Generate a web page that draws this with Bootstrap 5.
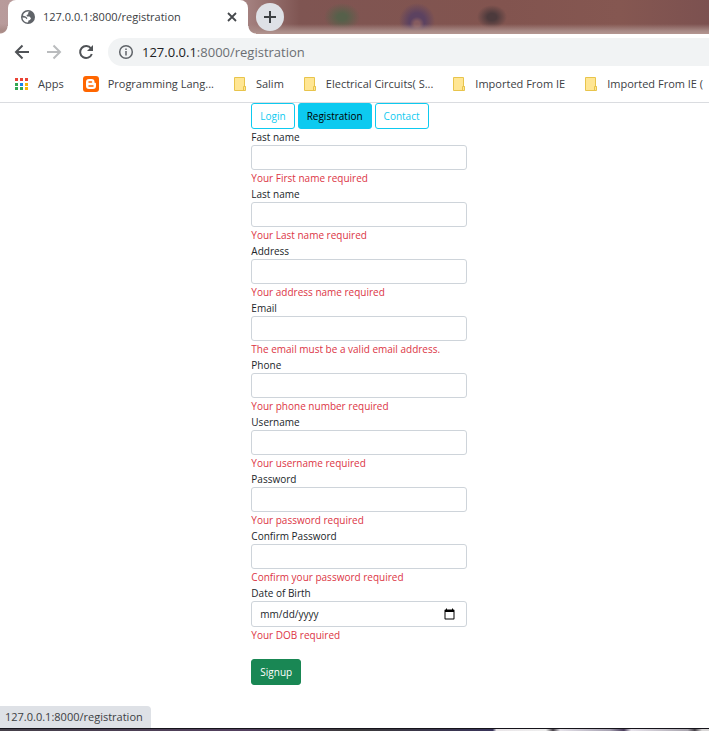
<!DOCTYPE html>
<html lang="en">
<head>
<meta charset="utf-8">
<meta name="viewport" content="width=device-width, initial-scale=1">
<title>Registration</title>
<link href="https://cdn.jsdelivr.net/npm/bootstrap@5.3.0/dist/css/bootstrap.min.css" rel="stylesheet">
<style>
body { font-family: "Open Sans", "Noto Sans", sans-serif; font-size: 10px; line-height: 16px; color: #212529; background: #fff; overflow-x: hidden; }
.chrome-text { font-size: 11px; color: #3c4043; }
.tabstrip { height: 34px; padding-left: 8px; background:
  linear-gradient(180deg, transparent 24px, #a88a86 31px, #b49691 34px),
  radial-gradient(ellipse 18px 14px at 342px 17px, #56604a 25%, transparent 100%),
  radial-gradient(circle 9px at 417px 24px, #865c60 30%, transparent 80%),
  radial-gradient(circle 20px at 417px 21px, #5c4260 40%, transparent 90%),
  radial-gradient(ellipse 15px 12px at 492px 17px, #4c3a3c 30%, transparent 100%),
  linear-gradient(90deg, #b89b9b 0, #a98786 240px, #7f5552 300px, #82544f 500px, #855751 620px, #7c5150 709px); }
.tab { width: 240px; height: 34px; padding: 0 10px 0 13px; background: #fff; border-radius: 8px 8px 0 0; position: relative; }
.tab::before, .tab::after { content: ""; position: absolute; bottom: 0; width: 8px; height: 8px; }
.tab::before { left: -8px; background: radial-gradient(circle at 0 0, transparent 7px, #fff 8px); }
.tab::after { right: -8px; background: radial-gradient(circle at 100% 0, transparent 7px, #fff 8px); }
.bare { border: 0; padding: 0; background: none; color: #5f6368; display: flex; align-items: center; justify-content: center; }
.bare svg, .bookmark svg { display: block; }
.new-tab { width: 28px; height: 28px; background: #dee1e6; border-radius: 50%; margin: 3px 0 0 8px; }
.toolbar { height: 36px; padding-left: 14px; }
.tools { display: flex; gap: 16px; margin-right: 14px; }
.tool { width: 16px; }
.omnibox { height: 28px; background: #f1f3f4; border-radius: 14px 0 0 14px; padding-left: 10px; font-size: 13px; color: #6b6f73; }
.omnibox b { font-weight: 400; color: #202124; }
.bookmarks { height: 33px; padding: 0 0 4px 14px; border-bottom: 1px solid #dadce0; overflow: hidden; gap: 19px; }
.bookmark { display: flex; align-items: center; flex: none; gap: 9px; text-decoration: none; white-space: nowrap; }
.page { padding-left: 9px; }
.page .row { --bs-gutter-x: 18px; margin: 0; }
.page-links { gap: 3px; }
.btn-page { --bs-btn-padding-x: 8px; --bs-btn-padding-y: 4px; --bs-btn-font-size: 10px; --bs-btn-line-height: 16px; --bs-btn-border-radius: 3px; flex: none; }
.field label, .field .error { display: block; line-height: 16px; }
.field .form-control { font-size: 10px; line-height: 15px; height: 25px; min-height: 0; padding: 4px 8px; border-color: #ced4da; border-radius: 3px; color: #212529; }
.field .form-control[type=date] { height: 26px; }
.field ::-webkit-datetime-edit { line-height: 16px; padding: 0; }
.field ::-webkit-calendar-picker-indicator { width: 13px; height: 13px; padding: 0; margin-right: 2px; }
.status { position: absolute; left: 0; bottom: 3px; height: 22px; padding: 3px 8px 3px 5px; background: #dee1e6; border-radius: 0 4px 0 0; }
.taskbar { height: 3px; border-top: 1px solid #15131a; background: linear-gradient(90deg, #454049 0, #53405f 35%, #3b393a 50%, #39345a 69.5%, #e9e5e8 70%, #eee 77%, #454047 78%, #e4e1e8 79%, #a7a2b2 86%, #4a3d5c 88%, #e6e2ea 89%, #a9a5ae 97%, #454047 98%, #d9d7d7 99%); }
</style>
</head>
<body>
<div class="d-flex flex-column min-vh-100 position-relative">
  <header>
    <div class="tabstrip d-flex chrome-text">
      <div class="tab d-flex align-items-center">
        <svg width="14" height="14" viewBox="0 0 14 14"><circle cx="7" cy="7" r="7" fill="#5f6368"/><path d="M8.500 1.800 7 2.800l.3 1.400-1.800.8.500 1.500h2.500l1.500 1.800-1 1.700-1.500.5L7 12.600A5.600 5.600 0 0 1 1.400 7.500l2.800.2 1.600 1.500.6-1.200-1.700-1.600-2.900-.9A5.600 5.600 0 0 1 8.500 1.800z" fill="#fff"/></svg>
        <span class="ms-2 flex-grow-1">127.0.0.1:8000/registration</span>
        <button class="bare" type="button" aria-label="Close tab"><svg width="12" height="12" viewBox="0 0 12 12"><path d="m2 2 8 8m0-8-8 8" stroke="#45484c" stroke-width="1.800"/></svg></button>
      </div>
      <button class="bare new-tab" type="button" aria-label="New tab"><svg width="14" height="14" viewBox="0 0 14 14"><path d="M7 1v12M1 7h12" stroke="#3c4043" stroke-width="2"/></svg></button>
    </div>
    <div class="toolbar d-flex align-items-center">
      <div class="tools">
        <button class="bare tool" type="button" aria-label="Back"><svg width="16" height="16" viewBox="0 0 16 16"><path d="M15 8H2m6.500-6.500L2 8l6.500 6.500" fill="none" stroke="#505357" stroke-width="2"/></svg></button>
        <button class="bare tool" type="button" aria-label="Forward"><svg width="16" height="16" viewBox="0 0 16 16"><path d="M1 8h13M7.500 1.500 14 8l-6.500 6.500" fill="none" stroke="#babcbe" stroke-width="2"/></svg></button>
        <button class="bare tool" type="button" aria-label="Reload"><svg width="16" height="16" viewBox="0 0 16 16"><path d="M13 4.500A6 6 0 1 0 13.800 10" fill="none" stroke="#505357" stroke-width="2"/><path d="M15 1v6H9z" fill="#505357"/></svg></button>
      </div>
      <div class="omnibox flex-grow-1 d-flex align-items-center">
        <svg width="16" height="16" viewBox="0 0 16 16" fill="none" stroke="#5f6368"><circle cx="8" cy="8" r="6.300" stroke-width="1.500"/><path d="M8 7v4.500M8 4.500V6" stroke-width="1.500"/></svg>
        <span class="ms-2"><b>127.0.0.1</b>:8000/registration</span>
      </div>
    </div>
    <nav class="bookmarks d-flex align-items-center" aria-label="Bookmarks">
      <a class="bookmark chrome-text" href="#"><svg width="15" height="14" viewBox="0 0 15 14"><path fill="#ea4335" d="M1 1h3v3H1zm5 0h3v3H6zm5 0h3v3h-3z"/><path fill="#34a853" d="M1 6h3v3H1zm0 4h3v3H1zM6 10h3v3H6z"/><path fill="#1a82e8" d="M6 6h3v3H6z"/><path fill="#fbb505" d="M11 6h3v3h-3zm0 4h3v3h-3z"/></svg>Apps</a>
      <a class="bookmark chrome-text" href="#"><svg width="16" height="16" viewBox="0 0 16 16"><rect width="16" height="16" rx="3" fill="#f60"/><path fill="#fff" d="M6 3h2.500a3 3 0 0 1 3 3v.7h.8l.7.7V10a3 3 0 0 1-3 3H6a3 3 0 0 1-3-3V6a3 3 0 0 1 3-3z"/><path d="M6 6h2.500M6 10h4" stroke="#f60" stroke-width="1.500" stroke-linecap="round"/></svg>Programming Lang...</a>
      <a class="bookmark chrome-text" href="#"><svg width="14" height="16" viewBox="0 0 14 16"><path d="M1.500 1.500h10v9h1v4h-11z" fill="#ffe694" stroke="#e8c44c"/><path d="M10.500 14.500v-4h2" fill="none" stroke="#e8c44c"/></svg>Salim</a>
      <a class="bookmark chrome-text" href="#"><svg width="14" height="16" viewBox="0 0 14 16"><path d="M1.500 1.500h10v9h1v4h-11z" fill="#ffe694" stroke="#e8c44c"/><path d="M10.500 14.500v-4h2" fill="none" stroke="#e8c44c"/></svg>Electrical Circuits( S...</a>
      <a class="bookmark chrome-text" href="#"><svg width="14" height="16" viewBox="0 0 14 16"><path d="M1.500 1.500h10v9h1v4h-11z" fill="#ffe694" stroke="#e8c44c"/><path d="M10.500 14.500v-4h2" fill="none" stroke="#e8c44c"/></svg>Imported From IE</a>
      <a class="bookmark chrome-text" href="#"><svg width="14" height="16" viewBox="0 0 14 16"><path d="M1.500 1.500h10v9h1v4h-11z" fill="#ffe694" stroke="#e8c44c"/><path d="M10.500 14.500v-4h2" fill="none" stroke="#e8c44c"/></svg>Imported From IE (</a>
    </nav>
  </header>
  <main class="page flex-grow-1 pb-4">
    <div class="row">
      <div class="col-4 offset-4">
        <nav class="page-links d-flex" aria-label="Pages">
          <a class="btn btn-outline-info btn-page" href="#">Login</a>
          <a class="btn btn-info btn-page" href="#">Registration</a>
          <a class="btn btn-outline-info btn-page" href="#">Contact</a>
        </nav>
        <form novalidate>
          <div class="field"><label for="fname">Fast name</label><input class="form-control" id="fname" type="text"><span class="error text-danger">Your First name required</span></div>
          <div class="field"><label for="lname">Last name</label><input class="form-control" id="lname" type="text"><span class="error text-danger">Your Last name required</span></div>
          <div class="field"><label for="address">Address</label><input class="form-control" id="address" type="text"><span class="error text-danger">Your address name required</span></div>
          <div class="field"><label for="email">Email</label><input class="form-control" id="email" type="email"><span class="error text-danger">The email must be a valid email address.</span></div>
          <div class="field"><label for="phone">Phone</label><input class="form-control" id="phone" type="tel"><span class="error text-danger">Your phone number required</span></div>
          <div class="field"><label for="username">Username</label><input class="form-control" id="username" type="text"><span class="error text-danger">Your username required</span></div>
          <div class="field"><label for="password">Password</label><input class="form-control" id="password" type="password"><span class="error text-danger">Your password required</span></div>
          <div class="field"><label for="confirm">Confirm Password</label><input class="form-control" id="confirm" type="password"><span class="error text-danger">Confirm your password required</span></div>
          <div class="field"><label for="dob">Date of Birth</label><input class="form-control" id="dob" type="date"><span class="error text-danger">Your DOB required</span></div>
          <button class="btn btn-success btn-page mt-3" type="submit">Signup</button>
        </form>
      </div>
    </div>
  </main>
  <div class="status chrome-text">127.0.0.1:8000/registration</div>
  <div class="taskbar"></div>
</div>
<script src="https://cdn.jsdelivr.net/npm/bootstrap@5.3.0/dist/js/bootstrap.bundle.min.js"></script>
</body>
</html>
